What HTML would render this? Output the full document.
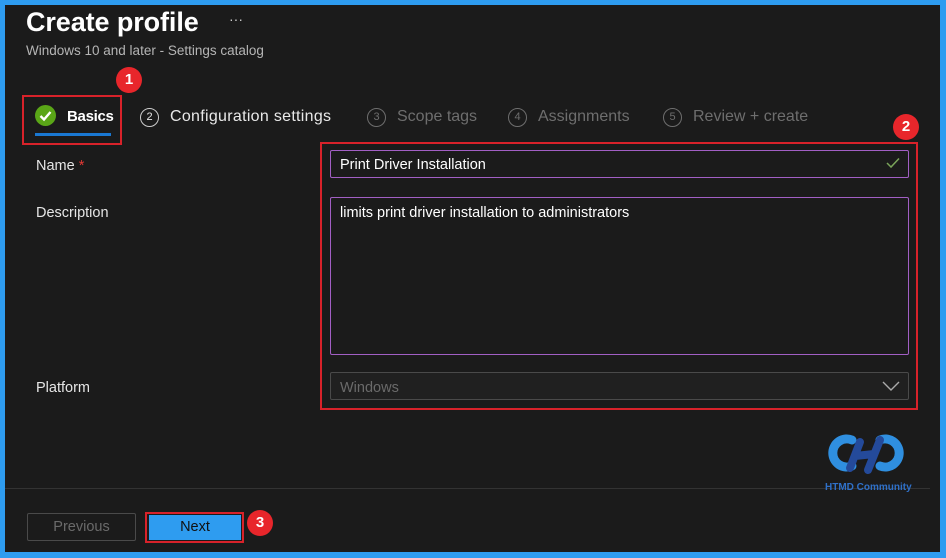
<!DOCTYPE html>
<html><head><meta charset="utf-8"><style>
*{margin:0;padding:0;box-sizing:border-box}
body{width:946px;height:558px;background:#2e9cf0;position:relative;overflow:hidden;font-family:"Liberation Sans",sans-serif}
#p{position:absolute;left:5px;top:5px;width:935px;height:547px;background:#1b1b1b}
.a{position:absolute;white-space:nowrap}
.step{position:absolute;top:108px;font-size:16px;color:#6e6e6e;white-space:nowrap}
.c{display:inline-block;width:19px;height:19px;border:1.5px solid #6e6e6e;border-radius:50%;font-size:11px;text-align:center;line-height:16px;vertical-align:1px;margin-right:11px}
.badge{position:absolute;width:26px;height:26px;border-radius:50%;background:#e8262b;color:#fff;font-weight:bold;font-size:15px;text-align:center;line-height:26px}
.lbl{position:absolute;left:36px;font-size:14.5px;color:#e6e6e6}
</style></head><body>
<div id="p"></div>
<div class="a" style="left:26px;top:7px;font-size:27px;color:#fff;font-weight:bold;letter-spacing:-0.1px">Create profile</div>
<div class="a" style="left:229px;top:11px;font-size:14px;color:#ccc">···</div>
<div class="a" style="left:26px;top:43px;font-size:13.5px;color:#b5b5b5">Windows 10 and later - Settings catalog</div>

<div style="position:absolute;left:22px;top:95px;width:100px;height:50px;border:2px solid #d8222a"></div>
<div class="badge" style="left:116px;top:67px">1</div>
<svg style="position:absolute;left:35px;top:105px" width="21" height="21"><circle cx="10.5" cy="10.5" r="10.5" fill="#5aa617"/><path d="M5.5 11 L9 14.5 L15.5 7" stroke="#fff" stroke-width="2.4" fill="none"/></svg>
<div class="a" style="left:67px;top:108px;font-size:15px;color:#fff;font-weight:bold;letter-spacing:-0.3px">Basics</div>
<div style="position:absolute;left:35px;top:133px;width:76px;height:3px;background:#1a78d2"></div>
<div class="step" style="left:140px;color:#e8e8e8;letter-spacing:0.3px"><span class="c" style="border-color:#ccc;letter-spacing:0">2</span>Configuration settings</div>
<div class="step" style="left:367px"><span class="c">3</span>Scope tags</div>
<div class="step" style="left:508px"><span class="c">4</span>Assignments</div>
<div class="step" style="left:663px"><span class="c">5</span>Review + create</div>

<div class="badge" style="left:893px;top:114px">2</div>
<div style="position:absolute;left:320px;top:142px;width:598px;height:268px;border:2.5px solid #d8222a"></div>

<div class="lbl" style="top:158px">Name <span style="color:#e53935">*</span></div>
<div style="position:absolute;left:330px;top:150px;width:579px;height:28px;border:1px solid #a25fc4;border-radius:2px"></div>
<div class="a" style="left:340px;top:157px;font-size:14.5px;color:#fff">Print Driver Installation</div>
<svg style="position:absolute;left:886px;top:157px" width="14" height="12"><path d="M1 6 L5 10 L13 1.5" stroke="#7aa55a" stroke-width="1.5" fill="none"/></svg>

<div class="lbl" style="top:205px">Description</div>
<div style="position:absolute;left:330px;top:197px;width:579px;height:158px;border:1px solid #a25fc4;border-radius:2px"></div>
<div class="a" style="left:340px;top:205px;font-size:14.5px;color:#fff">limits print driver installation to administrators</div>

<div class="lbl" style="top:380px">Platform</div>
<div style="position:absolute;left:330px;top:372px;width:579px;height:28px;border:1px solid #4a4a4a;background:#202020;border-radius:2px"></div>
<div class="a" style="left:340px;top:380px;font-size:14.5px;color:#6a6a6a">Windows</div>
<svg style="position:absolute;left:882px;top:381px" width="18" height="11"><path d="M1 1 L9 9 L17 1" stroke="#aaa" stroke-width="1.4" fill="none"/></svg>

<div style="position:absolute;left:5px;top:488px;width:925px;height:1px;background:#333"></div>
<svg style="position:absolute;left:822px;top:428px" width="90" height="52">
<path d="M30 12 A14 14 0 1 0 30 38" stroke="#2f8fe0" stroke-width="9" fill="none" stroke-linecap="round"/>
<path d="M58 12 A14 14 0 1 1 58 38" stroke="#2f8fe0" stroke-width="9" fill="none" stroke-linecap="round"/>
<path d="M38 14 L28 40 M58 12 L46 42 M33 28 L52 26" stroke="#244a9a" stroke-width="8" stroke-linecap="round"/>
</svg>
<div class="a" style="left:825px;top:482px;font-size:10px;font-weight:bold;color:#2f70c8">HTMD Community</div>

<div style="position:absolute;left:27px;top:513px;width:109px;height:28px;border:1px solid #4a4a4a;border-radius:2px;color:#6a6a6a;font-size:14.5px;text-align:center;line-height:26px">Previous</div>
<div style="position:absolute;left:145px;top:512px;width:99px;height:31px;border:2px solid #d8222a"></div>
<div style="position:absolute;left:149px;top:515px;width:92px;height:25px;background:#2e9cf0;color:#111;font-size:14.5px;text-align:center;line-height:25px">Next</div>
<div class="badge" style="left:247px;top:510px">3</div>
</body></html>
